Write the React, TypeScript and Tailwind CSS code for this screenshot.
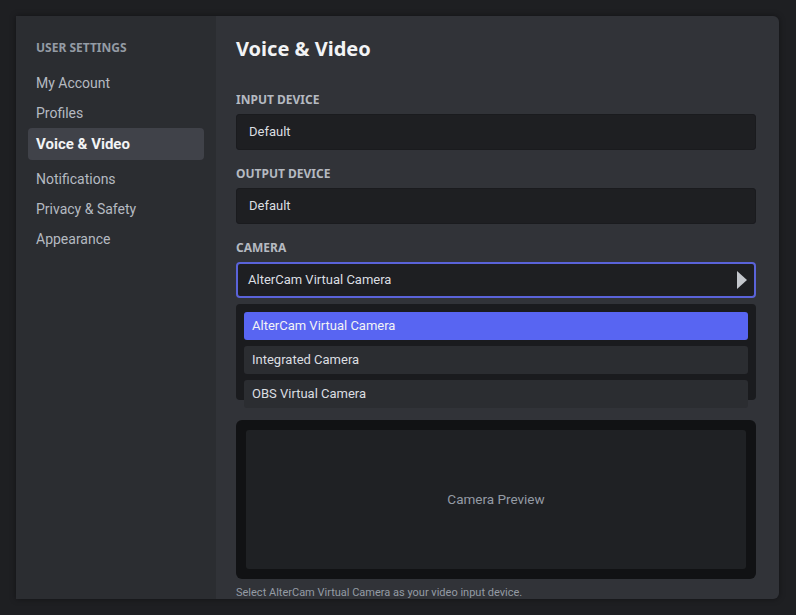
import React from "react"

const navItems = ["My Account", "Profiles", "Voice & Video", "Notifications", "Privacy & Safety", "Appearance"]
const cameras = ["AlterCam Virtual Camera", "Integrated Camera", "OBS Virtual Camera"]

const noto = { fontFamily: '"Noto Sans", "Open Sans", sans-serif' }
const body = { fontFamily: 'Roboto, "Noto Sans", sans-serif' }

function Label({ children }: { children: React.ReactNode }) {
	return (
		<div className="mb-[6px] text-[12px] font-bold uppercase leading-[17px] text-[#b5bac1]" style={noto}>
			{children}
		</div>
	)
}

function Field({ label, value }: { label: string; value: string }) {
	return (
		<div className="mt-[15px] first:mt-0">
			<Label>{label}</Label>
			<div className="flex h-9 items-center rounded-[3px] border border-[#1a1b1e] bg-[#1e1f22] px-3 text-[13px] text-[#dbdee1]">
				{value}
			</div>
		</div>
	)
}

export default function App() {
	const selected = "Voice & Video"
	return (
		<div className="h-[615px] w-[796px] bg-[#1e1f22] pl-4 pt-4" style={body}>
			<div className="flex h-[583px] w-[763px] overflow-hidden rounded-r-md shadow-[0_0_6px_rgba(0,0,0,0.4)]">
				<aside className="w-[200px] shrink-0 bg-[#2b2d31] px-3 pt-6">
					<div className="px-2 text-[12px] font-bold uppercase leading-4 text-[#949ba4]" style={noto}>
						User Settings
					</div>
					<nav className="mt-3 flex flex-col">
						{navItems.map((item) =>
							item === selected ? (
								<div
									key={item}
									className="mb-1 flex h-8 items-center rounded bg-[#404249] px-2 text-[15px] font-bold text-[#f2f3f5]"
								>
									{item}
								</div>
							) : (
								<div key={item} className="flex h-[30px] items-center px-2 text-[14px] text-[#b5bac1]">
									{item}
								</div>
							)
						)}
					</nav>
				</aside>

				<main className="flex-1 bg-[#313338] pl-5 pr-[23px] pt-5">
					<h1 className="text-[20px] font-bold leading-[26px] text-[#f2f3f5]" style={noto}>
						Voice &amp; Video
					</h1>
					<div className="mt-[29px]">
						<Field label="Input Device" value="Default" />
						<Field label="Output Device" value="Default" />

						<div className="mt-[15px]">
							<Label>Camera</Label>
							<div className="flex h-9 items-center justify-between rounded-[4px] border-2 border-[#5a63d9] bg-[#1e1f22] pl-[10px] pr-[6px] text-[13px] text-[#dbdee1]">
								<span>AlterCam Virtual Camera</span>
								<svg width="12" height="18" viewBox="0 0 12 18">
									<path d="M1 0 L11 9 L1 18 Z" fill="#c4c7cc" />
								</svg>
							</div>
							<div className="mt-[6px] h-[96px] rounded-[4px] bg-[#1a1b1e] px-2 pt-2">
								<div className="flex flex-col gap-[6px]">
									{cameras.map((cam, i) => (
										<div
											key={cam}
											className={
												i === 0
													? "flex h-7 items-center rounded-[3px] bg-[#5865f2] px-2 text-[13px] text-[#f2f3f5]"
													: "flex h-7 items-center rounded-[3px] bg-[#2b2d31] px-2 text-[13px] text-[#dbdee1]"
											}
										>
											{cam}
										</div>
									))}
								</div>
							</div>
						</div>
					</div>

					<div className="mt-5 h-[159px] rounded-md bg-[#111214] p-[10px]">
						<div className="flex h-full items-center justify-center rounded-[3px] bg-[#1f2124] text-[13.5px] text-[#949ba4]">
							Camera Preview
						</div>
					</div>
					<p className="mt-[8px] text-[11px] leading-[12px] text-[#949ba4]">
						Select AlterCam Virtual Camera as your video input device.
					</p>
				</main>
			</div>
		</div>
	)
}
